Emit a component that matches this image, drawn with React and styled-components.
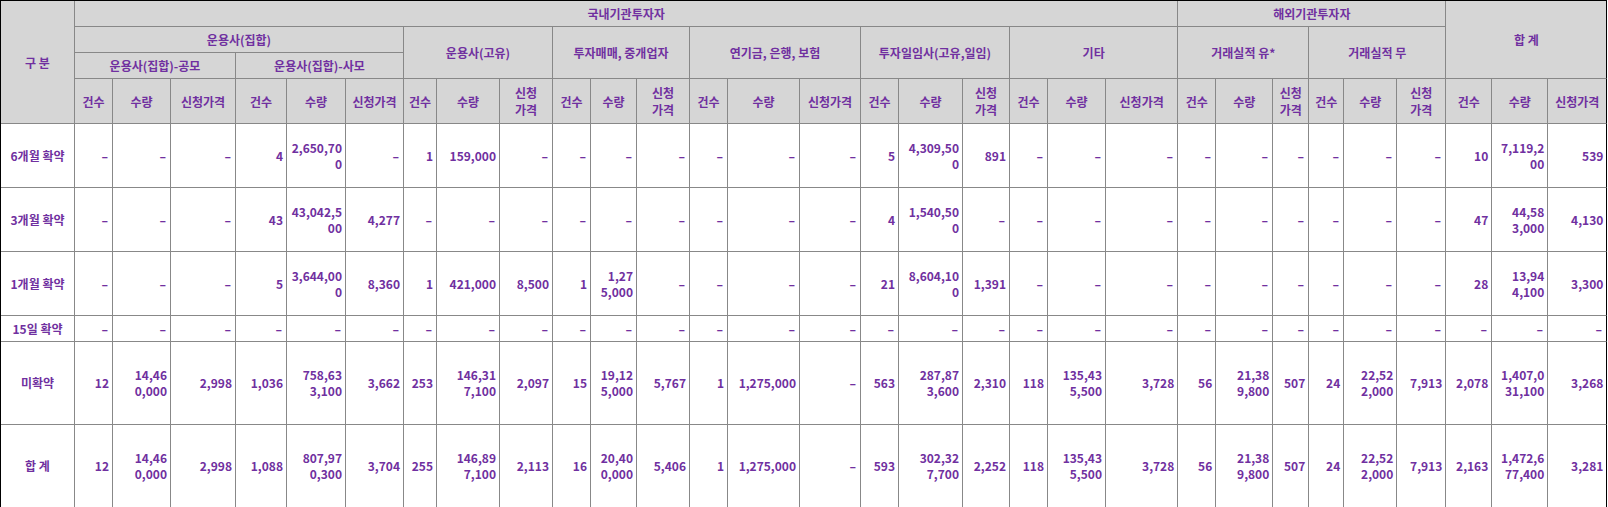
import React from "react";
import styled, { createGlobalStyle } from "styled-components";

const Global = createGlobalStyle`
  html, body { margin: 0; padding: 0; background: #fff; }
  * { box-sizing: border-box; }
`;

const Table = styled.table`
  border-collapse: separate;
  border-spacing: 0;
  table-layout: fixed;
  width: 1607px;
  border-top: 1px solid #000;
  border-left: 1px solid #000;
  font-family: "Noto Sans CJK KR", "Noto Sans", sans-serif;
  font-size: 12px;
  font-weight: 700;
  color: #7030a0;
`;

const Col = styled.col``;

const Row = styled.tr`
  height: ${(p) => p.$h}px;
`;

const HeadCell = styled.th`
  background: #d6d6d6;
  border-right: 1px solid ${(p) => (p.$edge ? "#000" : "#888")};
  border-bottom: 1px solid #888;
  padding: 0 3px;
  text-align: center;
  vertical-align: middle;
  line-height: 17px;
  font-weight: 700;
  white-space: nowrap;
  overflow: hidden;
`;

const DataCell = styled.td`
  background: #fff;
  border-right: 1px solid ${(p) => (p.$edge ? "#000" : "#888")};
  border-bottom: 1px solid #888;
  padding: 0 3px;
  text-align: ${(p) => (p.$center ? "center" : "right")};
  vertical-align: middle;
  line-height: 16px;
  white-space: nowrap;
  overflow: hidden;
`;

const Dash = styled.span`
  display: inline-block;
  transform: scaleX(1.6);
  transform-origin: right center;
  margin-right: 1px;
`;

const widths = [74, 38, 58, 65, 51, 59, 58, 33, 63, 53, 38, 46, 53, 38, 72, 61, 38, 64, 47, 38, 58, 72, 38, 57, 36, 35, 53, 49, 46, 56, 59];

const priceWrap = [false, false, true, true, false, true, false, true, true, false];

const D = "-";
const rows = [
  { label: "6개월 확약", h: 64, v: [D, D, D, "4", "2,650,70|0", D, "1", "159,000", D, D, D, D, D, D, D, "5", "4,309,50|0", "891", D, D, D, D, D, D, D, D, D, "10", "7,119,2|00", "539"] },
  { label: "3개월 확약", h: 64, v: [D, D, D, "43", "43,042,5|00", "4,277", D, D, D, D, D, D, D, D, D, "4", "1,540,50|0", D, D, D, D, D, D, D, D, D, D, "47", "44,58|3,000", "4,130"] },
  { label: "1개월 확약", h: 64, v: [D, D, D, "5", "3,644,00|0", "8,360", "1", "421,000", "8,500", "1", "1,27|5,000", D, D, D, D, "21", "8,604,10|0", "1,391", D, D, D, D, D, D, D, D, D, "28", "13,94|4,100", "3,300"] },
  { label: "15일 확약", h: 26, v: Array(30).fill(D) },
  { label: "미확약", h: 83, v: ["12", "14,46|0,000", "2,998", "1,036", "758,63|3,100", "3,662", "253", "146,31|7,100", "2,097", "15", "19,12|5,000", "5,767", "1", "1,275,000", D, "563", "287,87|3,600", "2,310", "118", "135,43|5,500", "3,728", "56", "21,38|9,800", "507", "24", "22,52|2,000", "7,913", "2,078", "1,407,0|31,100", "3,268"] },
  { label: "합 계", h: 83, v: ["12", "14,46|0,000", "2,998", "1,088", "807,97|0,300", "3,704", "255", "146,89|7,100", "2,113", "16", "20,40|0,000", "5,406", "1", "1,275,000", D, "593", "302,32|7,700", "2,252", "118", "135,43|5,500", "3,728", "56", "21,38|9,800", "507", "24", "22,52|2,000", "7,913", "2,163", "1,472,6|77,400", "3,281"] },
];

const Lines = ({ text }) => {
  if (text === D) return <Dash>{D}</Dash>;
  const parts = text.split("|");
  return parts.map((p, i) => (
    <React.Fragment key={i}>
      {i > 0 && <br />}
      {p}
    </React.Fragment>
  ));
};

export default function App() {
  return (
    <>
      <Global />
      <Table>
        <colgroup>
          {widths.map((w, i) => (
            <Col key={i} style={{ width: w }} />
          ))}
        </colgroup>
        <thead>
          <Row $h={26}>
            <HeadCell rowSpan={4}>구 분</HeadCell>
            <HeadCell colSpan={21}>국내기관투자자</HeadCell>
            <HeadCell colSpan={6}>해외기관투자자</HeadCell>
            <HeadCell colSpan={3} rowSpan={3} $edge>합 계</HeadCell>
          </Row>
          <Row $h={26}>
            <HeadCell colSpan={6}>운용사(집합)</HeadCell>
            <HeadCell colSpan={3} rowSpan={2}>운용사(고유)</HeadCell>
            <HeadCell colSpan={3} rowSpan={2}>투자매매, 중개업자</HeadCell>
            <HeadCell colSpan={3} rowSpan={2}>연기금, 은행, 보험</HeadCell>
            <HeadCell colSpan={3} rowSpan={2}>투자일임사(고유,일임)</HeadCell>
            <HeadCell colSpan={3} rowSpan={2}>기타</HeadCell>
            <HeadCell colSpan={3} rowSpan={2}>거래실적 유*</HeadCell>
            <HeadCell colSpan={3} rowSpan={2}>거래실적 무</HeadCell>
          </Row>
          <Row $h={26}>
            <HeadCell colSpan={3}>운용사(집합)-공모</HeadCell>
            <HeadCell colSpan={3}>운용사(집합)-사모</HeadCell>
          </Row>
          <Row $h={45}>
            {priceWrap.map((wrap, g) => (
              <React.Fragment key={g}>
                <HeadCell>건수</HeadCell>
                <HeadCell>수량</HeadCell>
                <HeadCell $edge={g === priceWrap.length - 1}>
                  <Lines text={wrap ? "신청|가격" : "신청가격"} />
                </HeadCell>
              </React.Fragment>
            ))}
          </Row>
        </thead>
        <tbody>
          {rows.map((r) => (
            <Row key={r.label} $h={r.h}>
              <DataCell $center>{r.label}</DataCell>
              {r.v.map((val, i) => (
                <DataCell key={i} $edge={i === r.v.length - 1}>
                  <Lines text={val} />
                </DataCell>
              ))}
            </Row>
          ))}
        </tbody>
      </Table>
    </>
  );
}
